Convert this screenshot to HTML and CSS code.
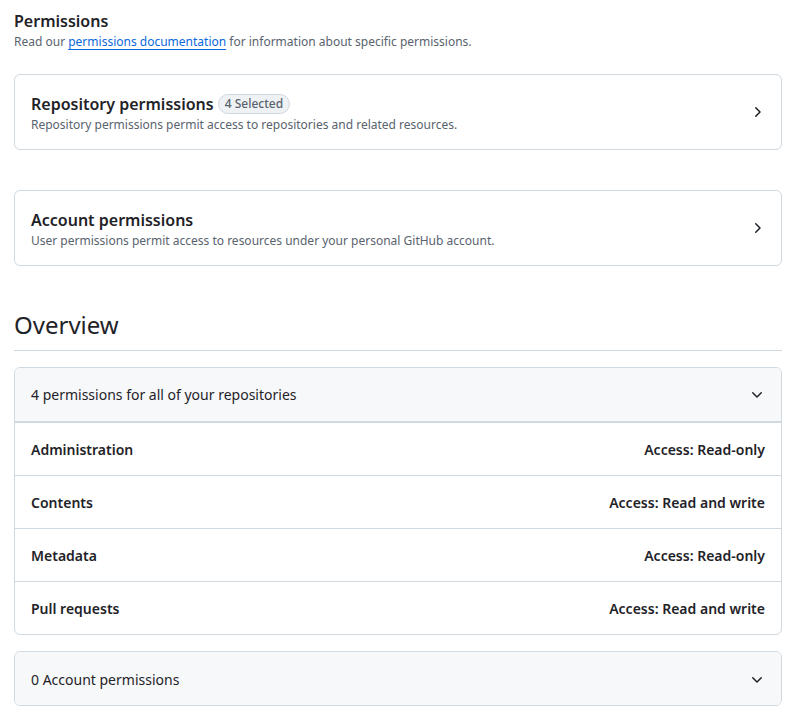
FILE: index.html
```html
<!DOCTYPE html>
<html>
<head>
<meta charset="utf-8">
<link rel="stylesheet" href="styles.css">
</head>
<body>
<div class="page">
  <div class="intro">
    <h2 class="intro-title">Permissions</h2>
    <p class="intro-note">Read our <a href="#" class="link">permissions documentation</a> for information about specific permissions.</p>
  </div>

  <div class="card">
    <div class="card-text">
      <div class="card-title">Repository permissions <span class="counter">4 Selected</span></div>
      <div class="card-desc">Repository permissions permit access to repositories and related resources.</div>
    </div>
    <svg class="icon" width="16" height="16" viewBox="0 0 16 16"><path d="M6.22 3.22a.75.75 0 0 1 1.06 0l4.25 4.25a.75.75 0 0 1 0 1.06l-4.25 4.25a.751.751 0 0 1-1.042-.018.751.751 0 0 1-.018-1.042L9.94 8 6.22 4.28a.75.75 0 0 1 0-1.06Z"/></svg>
  </div>

  <div class="card card-gap">
    <div class="card-text">
      <div class="card-title">Account permissions</div>
      <div class="card-desc">User permissions permit access to resources under your personal GitHub account.</div>
    </div>
    <svg class="icon" width="16" height="16" viewBox="0 0 16 16"><path d="M6.22 3.22a.75.75 0 0 1 1.06 0l4.25 4.25a.75.75 0 0 1 0 1.06l-4.25 4.25a.751.751 0 0 1-1.042-.018.751.751 0 0 1-.018-1.042L9.94 8 6.22 4.28a.75.75 0 0 1 0-1.06Z"/></svg>
  </div>

  <h2 class="subhead">Overview</h2>

  <div class="box">
    <div class="box-header">
      <span>4 permissions for all of your repositories</span>
      <svg class="icon" width="16" height="16" viewBox="0 0 16 16"><path d="M12.78 5.22a.749.749 0 0 1 0 1.06l-4.25 4.25a.749.749 0 0 1-1.06 0L3.22 6.28a.749.749 0 1 1 1.06-1.06L8 8.94l3.72-3.72a.749.749 0 0 1 1.06 0Z"/></svg>
    </div>
    <div class="row"><span>Administration</span><span>Access: Read-only</span></div>
    <div class="row"><span>Contents</span><span>Access: Read and write</span></div>
    <div class="row"><span>Metadata</span><span>Access: Read-only</span></div>
    <div class="row"><span>Pull requests</span><span>Access: Read and write</span></div>
  </div>

  <div class="box box-collapsed">
    <div class="box-header">
      <span>0 Account permissions</span>
      <svg class="icon" width="16" height="16" viewBox="0 0 16 16"><path d="M12.78 5.22a.749.749 0 0 1 0 1.06l-4.25 4.25a.749.749 0 0 1-1.06 0L3.22 6.28a.749.749 0 1 1 1.06-1.06L8 8.94l3.72-3.72a.749.749 0 0 1 1.06 0Z"/></svg>
    </div>
  </div>
</div>
</body>
</html>
```

FILE: styles.css
```css
* { box-sizing: border-box; }
html, body { margin: 0; padding: 0; background: #fff; }
body {
  font-family: "Noto Sans", "Open Sans", sans-serif;
  color: #1f2328;
  font-size: 14px;
  line-height: 1.5;
}
.page {
  width: 768px;
  margin-left: 14px;
  padding-top: 9px;
}
.intro-title {
  margin: 0;
  font-size: 16px;
  font-weight: 600;
  line-height: 24px;
}
.intro-note {
  margin: 0;
  font-size: 12px;
  line-height: 18px;
  color: #59636e;
}
.link {
  color: #0969da;
  text-decoration: underline;
  text-underline-offset: 3px;
}
.card {
  margin-top: 23px;
  border: 1px solid #d1d9e0;
  border-radius: 6px;
  padding: 17px 16px 15px;
  display: flex;
  align-items: center;
  justify-content: space-between;
}
.card-gap { margin-top: 40px; }
.card-title {
  font-size: 16px;
  font-weight: 600;
  line-height: 24px;
  display: flex;
  align-items: center;
  gap: 4px;
}
.counter {
  font-size: 12px;
  font-weight: 500;
  line-height: 18px;
  padding: 0 6px;
  border: 1px solid #d1d9e0;
  border-radius: 2em;
  background: #eff2f5;
  color: #59636e;
}
.card-desc {
  font-size: 12px;
  line-height: 18px;
  color: #59636e;
}
.icon {
  fill: #1f2328;
  flex: none;
}
.card .icon { margin-top: -2px; }
.subhead {
  margin: 40px 0 16px;
  font-size: 24px;
  font-weight: 400;
  line-height: 36px;
  padding-top: 1px;
  padding-bottom: 7px;
  border-bottom: 1px solid #d1d9e0;
}
.box {
  border: 1px solid #d1d9e0;
  border-radius: 6px;
  overflow: hidden;
}
.box-header {
  background: #f6f8fa;
  padding: 16px;
  display: flex;
  align-items: center;
  justify-content: space-between;
  line-height: 21px;
  border-bottom: 2px solid #d1d9e0;
}
.box-collapsed { margin-top: 16px; }
.box-collapsed .box-header { border-bottom: 0; padding: 17px 16px 15px; }
.row {
  padding: 17px 16px 15px;
  display: flex;
  justify-content: space-between;
  font-weight: 600;
  line-height: 20px;
  border-bottom: 1px solid #d1d9e0;
}
.row:last-child { border-bottom: 0; }
```
